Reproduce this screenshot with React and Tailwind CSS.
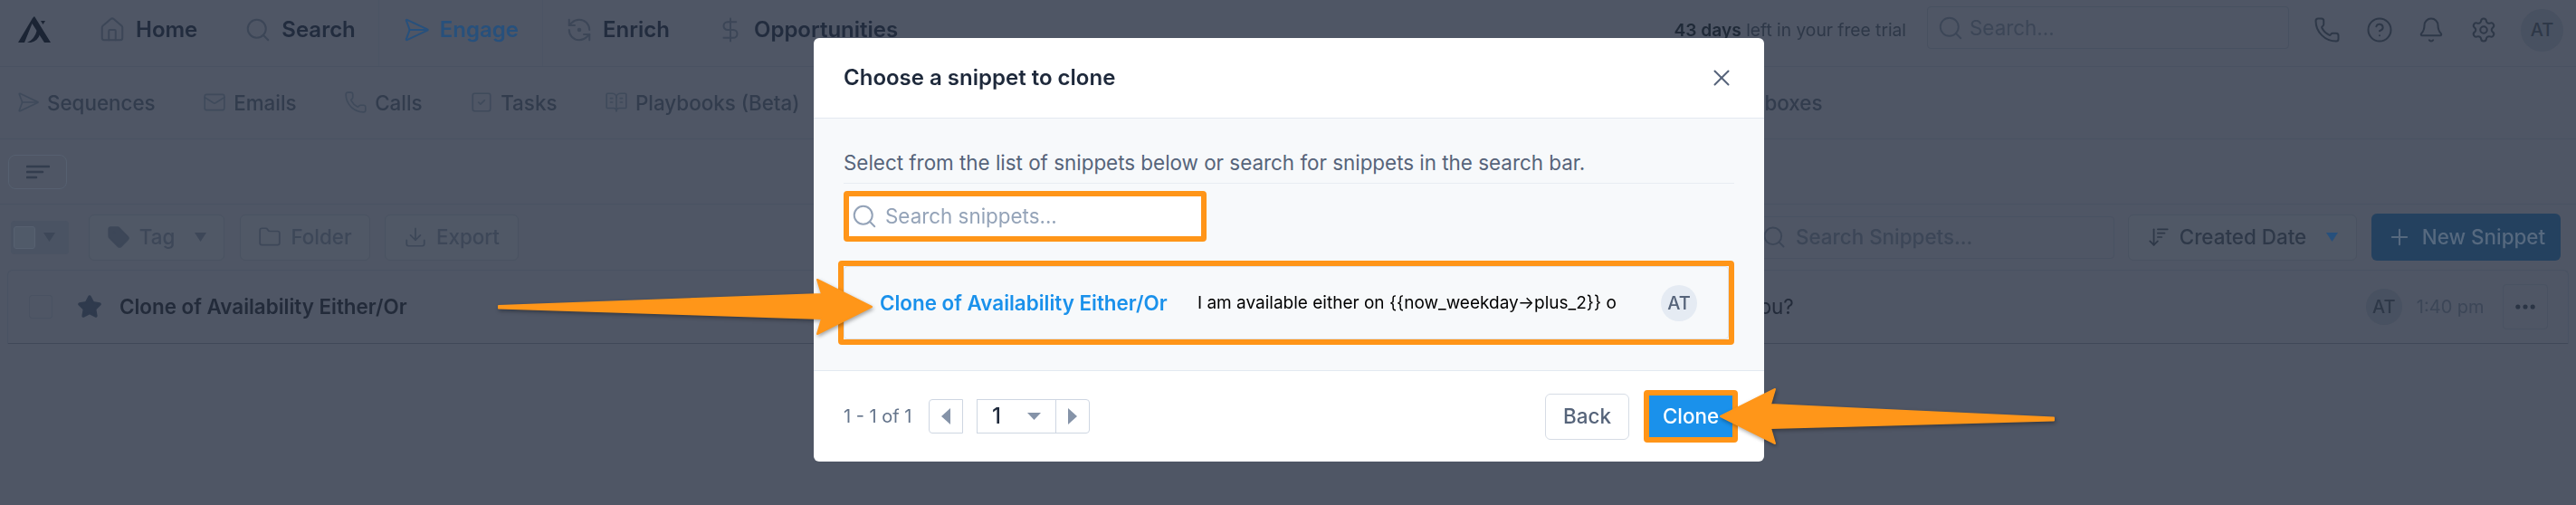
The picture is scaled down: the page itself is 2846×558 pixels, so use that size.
import {
  House, Search, SendHorizontal, RefreshCcwDot, DollarSign, Mail, Phone, SquareCheck, BookOpenText,
  CircleHelp, Bell, Settings, Plus, Tag, Folder, Download, Star, ArrowDownWideNarrow,
  Ellipsis, X,
} from 'lucide-react';

const topTabs = [
  { label: 'Home', icon: House },
  { label: 'Search', icon: Search },
  { label: 'Engage', icon: SendHorizontal, active: true },
  { label: 'Enrich', icon: RefreshCcwDot },
  { label: 'Opportunities', icon: DollarSign },
];

const subTabs = [
  { label: 'Sequences', icon: SendHorizontal },
  { label: 'Emails', icon: Mail },
  { label: 'Calls', icon: Phone },
  { label: 'Tasks', icon: SquareCheck },
  { label: 'Playbooks (Beta)', icon: BookOpenText },
];

function Logo() {
  return (
    <svg width="36" height="30" viewBox="0 0 36 30" className="text-[#1b2434]">
      <path fill="currentColor" d="M0 29 L16 2 L18 0 L36 29 L29 29 L15.5 8 L7 29 Z" />
      <path fill="currentColor" d="M10 29 Q18 26 21 15 L24 20 Q22 27 14 29 Z M25 5 L30 5 L27.5 9 Z" />
    </svg>
  );
}

// everything behind the modal, dimmed by the page colour itself
function Background() {
  return (
    <div className="flex flex-col blur-[0.4px]">
      <div className="flex h-[74px] items-center border-b border-[#495262] pb-[7px]">
        <div className="flex w-[62px] justify-end pr-[6px]"><Logo /></div>
        <div className="-mb-[7px] ml-[47px] flex items-center gap-[52px] self-stretch">
          {topTabs.map(({ label, icon: Icon, active }) => (
            <div
              key={label}
              className={`flex h-full items-center gap-[11px] pb-[7px] ${active ? '-mx-[27px] border-x border-[#4b5464] px-[26px]' : ''}`}
            >
              <Icon size={30} strokeWidth={1.6} className={`shrink-0 ${active ? 'text-[#27507c]' : 'text-[#3c4657]'}`} />
              <span className={`text-[24px] font-semibold ${active ? 'text-[#27507c]' : 'text-[#222c3e]'}`}>{label}</span>
            </div>
          ))}
        </div>
        <div className="ml-auto flex items-center pr-[14px]">
          <span className="text-[19.2px] text-[#2e3848]"><b className="font-semibold text-[#1f2937]">43 days</b> left in your free trial</span>
          <div className="-mt-[5px] ml-[23px] flex h-[47px] w-[400px] items-center gap-[6px] rounded border border-[#475060] pl-[10px]">
            <Search size={30} strokeWidth={1.5} className="text-[#3c4657]" />
            <span className="text-[22.4px] text-[#3c4657]">Search...</span>
          </div>
          <Phone size={30} strokeWidth={1.6} className="ml-[27px] text-[#2e3848]" />
          <CircleHelp size={30} strokeWidth={1.6} className="ml-[28px] text-[#2e3848]" />
          <Bell size={30} strokeWidth={1.6} className="ml-[27px] text-[#2e3848]" />
          <Settings size={30} strokeWidth={1.6} className="ml-[28px] text-[#2e3848]" />
          <div className="ml-[26px] flex h-[47px] w-[47px] items-center justify-center rounded-full bg-[#485161] text-[20px] font-medium text-[#2e3848]">AT</div>
        </div>
      </div>

      <div className="flex h-[80px] items-center gap-[52.5px] border-b border-[#495262] pl-[18px] text-[22.4px] font-medium text-[#323c4d]">
        {subTabs.map(({ label, icon: Icon }) => (
          <div key={label} className="flex items-center gap-[8px]">
            <Icon size={26} strokeWidth={1.5} className="text-[#3f4a5b]" />
            <span>{label}</span>
          </div>
        ))}
        <span className="ml-[969px]">Mailboxes</span>
      </div>

      <div className="flex h-[72px] items-center border-b border-[#495262] pl-[9px]">
        <div className="flex h-[38px] w-[65px] items-center justify-center rounded-lg border border-[#566070]">
          <svg width="26" height="16" viewBox="0 0 26 16" className="text-[#333d4e]">
            <path d="M1 2h24M1 8h17M1 14h10" stroke="currentColor" strokeWidth="2.6" strokeLinecap="round" />
          </svg>
        </div>
      </div>

      <div className="flex h-[72px] items-center pl-[12px] pr-[17px] text-[22.4px] font-medium text-[#3d4758]">
        <div className="flex h-[37px] w-[64px] items-center gap-[9px] rounded bg-[#4a5363] pl-[3px]">
          <div className="h-[25px] w-[24px] rounded-[3px] border border-[#566070] bg-[#505a69]" />
          <Caret />
        </div>
        <Btn className="ml-[22px] w-[150px]"><Tag size={26} fill="currentColor" strokeWidth={1.5} />Tag<span className="ml-[12px]"><Caret /></span></Btn>
        <Btn className="ml-[17px] w-[144px]"><Folder size={26} strokeWidth={1.6} />Folder</Btn>
        <Btn className="ml-[16px] w-[148px]"><Download size={26} strokeWidth={1.6} />Export</Btn>
        <div className="ml-auto flex h-[47px] w-[500px] items-center gap-[10px] rounded border border-[#495262] pl-[109px] text-[#3c4657]">
          <Search size={28} strokeWidth={1.6} />
          <span>Search Snippets...</span>
        </div>
        <Btn className="ml-[15px] w-[253px] text-[#2e3848]"><ArrowDownWideNarrow size={26} strokeWidth={1.6} />Created Date<span className="ml-[12px] text-[#27507c]"><Caret /></span></Btn>
        <div className="ml-[16px] flex h-[52px] w-[209px] items-center justify-center gap-[11px] rounded-md bg-[#24415f] text-[#56697f]">
          <Plus size={28} strokeWidth={1.8} />New Snippet
        </div>
      </div>

      <div className="mx-[8px] h-[82px] rounded-t-md border-x border-t border-[#495262]">
        <div className="flex h-full items-center whitespace-nowrap border-b border-[#3f4858] pl-[23px] pr-[22px]">
          <div className="h-[26px] w-[26px] shrink-0 rounded-[3px] border border-[#495262]" />
          <Star size={28} fill="currentColor" className="ml-[27px] shrink-0 text-[#2f3a4d]" />
          <span className="ml-[19px] text-[22.4px] font-semibold text-[#232b3a]">Clone of Availability Either/Or</span>
          <span className="ml-[1482px] text-[22.4px] text-[#232b3a]">you?</span>
          <div className="ml-[632px] flex h-[40px] w-[40px] shrink-0 items-center justify-center rounded-full bg-[#485161] text-[20px] font-medium text-[#2e3848]">AT</div>
          <span className="ml-[16px] text-[20px] text-[#3c4657]">1:40 pm</span>
          <div className="ml-auto flex h-[50px] w-[50px] shrink-0 items-center justify-center rounded border border-[#495262]">
            <Ellipsis size={28} strokeWidth={2.4} className="text-[#2a3444]" />
          </div>
        </div>
      </div>
    </div>
  );
}

function Btn({ className, children }) {
  return (
    <div className={`flex h-[51px] items-center justify-center gap-[10px] rounded-md border border-[#495261] bg-[#505866] ${className}`}>
      {children}
    </div>
  );
}

function Caret() {
  return (
    <svg width="13" height="10" viewBox="0 0 13 10"><path d="M0 0h13L6.5 10z" fill="currentColor" /></svg>
  );
}

function Modal() {
  return (
    <div className="absolute left-[899px] top-[42px] flex h-[468px] w-[1050px] flex-col overflow-hidden rounded-md bg-white">
      <div className="flex h-[89px] shrink-0 items-center justify-between border-b border-[#e3e9f1] pl-[33px] pr-[32px]">
        <h2 className="text-[24px] font-semibold text-[#1e293b]">Choose a snippet to clone</h2>
        <X size={30} strokeWidth={1.6} className="text-[#56637a]" />
      </div>
      <div className="flex-1 border-b border-[#e3e9f1] bg-[#f7f9fb] px-[33px] pt-[34px]">
        <p className="border-b border-[#e8ecf2] pb-[7px] text-[22.4px] leading-[30px] text-[#56647a]">
          Select from the list of snippets below or search for snippets in the search bar.
        </p>
        <div className="mt-[8px] flex h-[56px] w-[401px] items-center gap-[8px] rounded border-[6px] border-[#ff9518] bg-white pl-[2px]">
          <Search size={30} strokeWidth={1.6} className="text-[#94a3b8]" />
          <span className="text-[22.4px] text-[#94a3b8]">Search snippets...</span>
        </div>
        <div className="-ml-[6px] mt-[21px] h-[93px] w-[990px] rounded border-[6px] border-[#ff9518]">
          <div className="flex h-full items-center rounded border border-[#dfe4ea] pl-[39px] pt-[1px] text-[19px]">
            <span className="w-[351px] shrink-0 whitespace-nowrap text-[22.4px] font-semibold text-[#1a91eb]">Clone of Availability Either/Or</span>
            <span className="w-[465px] shrink-0 whitespace-nowrap text-black">I am available either on {'{{now_weekday→plus_2}}'} o</span>
            <div className="ml-[47px] flex h-[40px] w-[40px] shrink-0 items-center justify-center rounded-full bg-[#e5ebf3] text-[20px] font-medium text-[#56647a]">AT</div>
          </div>
        </div>
      </div>
      <div className="flex h-[100px] shrink-0 items-center pl-[33px] pr-[29px]">
        <span className="w-[75px] whitespace-nowrap text-[20px] text-[#64748b]">1 - 1 of 1</span>
        <div className="ml-[19px] flex h-[38px] w-[38px] items-center justify-center rounded-l border border-[#ced6e2]">
          <svg width="10" height="18" viewBox="0 0 10 18"><path d="M10 0v18L0 9z" fill="#8593a8" /></svg>
        </div>
        <div className="ml-[15px] flex h-[38px] w-[88px] items-center justify-between border border-[#ced6e2] pl-[16px] pr-[16px] text-[24px] font-medium text-[#1e293b]">
          1
          <svg width="15" height="8" viewBox="0 0 15 8"><path d="M0 0h15L7.5 8z" fill="#8593a8" /></svg>
        </div>
        <div className="-ml-px flex h-[38px] w-[38px] items-center justify-center rounded-r border border-[#ced6e2]">
          <svg width="10" height="18" viewBox="0 0 10 18"><path d="M0 0v18L10 9z" fill="#8593a8" /></svg>
        </div>
        <div className="ml-auto flex h-[51px] w-[93px] items-center justify-center rounded-md border border-[#d6dce5] text-[22.4px] font-medium text-[#56647a]">Back</div>
        <div className="ml-[16px] flex h-[58px] w-[104px] items-center justify-center rounded border-[6px] border-[#ff9518] bg-[#1a91eb] text-[22.4px] font-medium text-white">Clone</div>
      </div>
    </div>
  );
}

function Arrows() {
  return (
    <svg viewBox="0 0 2846 558" className="pointer-events-none absolute inset-0 h-full w-full drop-shadow-[1px_2px_2px_rgba(0,0,0,0.35)]">
      <path
        fill="#ff9619" stroke="#ff9619" strokeWidth="2" strokeLinejoin="round"
        d="M551 338 L551 340.5 L908 352 L903 369 L963 339 L903 309 L908 325 Z"
      />
      <path
        fill="#ff9619" stroke="#ff9619" strokeWidth="2" strokeLinejoin="round"
        d="M2269 461.5 L2269 464.5 L1956 473 L1961 490 L1901 460 L1961 430 L1956 447 Z"
      />
    </svg>
  );
}

export default function App() {
  return (
    <div className="relative h-[558px] w-[2846px] overflow-hidden bg-[#4f5665] font-['Inter',sans-serif]">
      <Background />
      <Modal />
      <Arrows />
    </div>
  );
}
